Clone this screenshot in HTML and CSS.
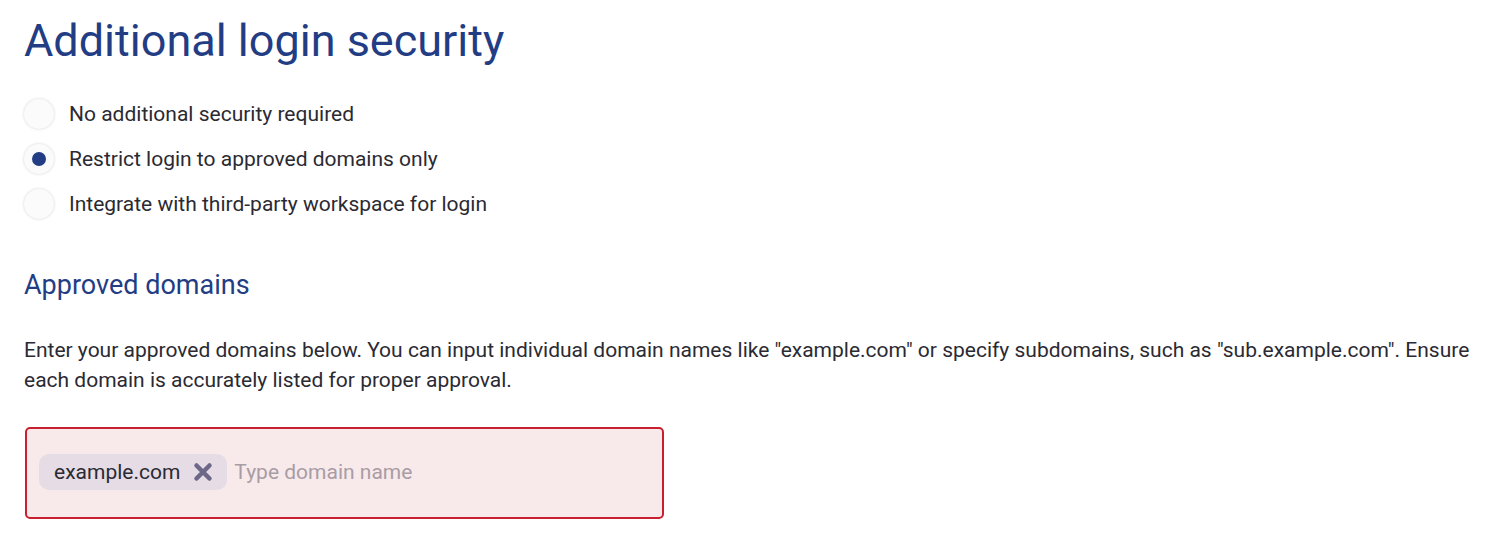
FILE: index.html
```html
<!DOCTYPE html>
<html lang="en">
<head>
    <meta charset="UTF-8">
    <meta name="viewport" content="width=device-width, initial-scale=1.0">
    <title>Additional login security</title>
    <link rel="stylesheet" href="styles.css">
</head>
<body>
    <div class="container">
        <h1>Additional login security</h1>

        <div class="options">
            <label class="option"><span class="radio"></span>No additional security required</label>
            <label class="option"><span class="radio checked"></span>Restrict login to approved domains only</label>
            <label class="option"><span class="radio"></span>Integrate with third-party workspace for login</label>
        </div>

        <h2>Approved domains</h2>

        <p class="help">Enter your approved domains below. You can input individual domain names like "example.com" or specify subdomains, such as "sub.example.com". Ensure each domain is accurately listed for proper approval.</p>

        <div class="domain-input">
            <span class="chip">example.com
                <svg class="chip-remove" width="20" height="20" viewBox="0 0 20 20"><path d="M3.5 3.5 L16.5 16.5 M16.5 3.5 L3.5 16.5" stroke="currentColor" stroke-width="4.5" stroke-linecap="round"/></svg>
            </span>
            <span class="placeholder">Type domain name</span>
        </div>
    </div>
</body>
</html>
```

FILE: styles.css
```css
body { margin: 0; font-family: Roboto, "Liberation Sans", Arial, sans-serif; color: #2b2a33; background: #ffffff; }
.container { padding: 0 24px; }
h1 { margin: 0; padding-top: 14px; font-size: 45px; font-weight: 400; line-height: 54px; color: #233d85; }
.options { margin-top: 31px; display: flex; flex-direction: column; gap: 15px; }
.option { display: flex; align-items: center; gap: 15px; font-size: 21px; line-height: 30px; }
.radio { width: 30px; height: 30px; border-radius: 50%; background: #fbfbfc; box-shadow: 0 0 3px rgba(0,0,0,0.18); display: flex; align-items: center; justify-content: center; }
.radio.checked::after { content: ""; width: 14px; height: 14px; border-radius: 50%; background: #233d85; }
h2 { margin: 48px 0 0; font-size: 27px; font-weight: 400; line-height: 36px; color: #233d85; }
.help { margin: 32px 0 0; font-size: 21px; line-height: 30px; }
.domain-input { margin-top: 32px; margin-left: 1px; width: 639px; height: 92px; box-sizing: border-box; border: 2px solid #c8202f; border-radius: 5px; background: #f8eaeb; display: flex; align-items: center; padding: 0 12px 3px; gap: 7px; }
.chip { display: flex; align-items: center; gap: 13px; height: 36px; padding: 0 14px 0 15px; border-radius: 10px; background: #e6dce5; font-size: 21px; }
.chip-remove { color: #6d6788; }
.placeholder { font-size: 21px; color: #a99ca5; }
```
